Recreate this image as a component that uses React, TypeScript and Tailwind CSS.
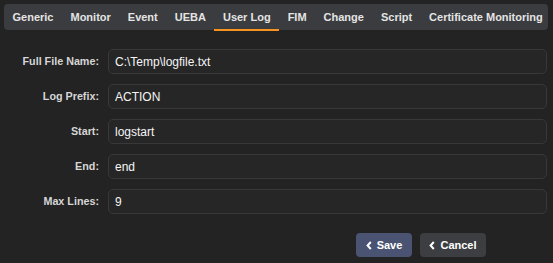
import { useState } from "react"

const tabs = ["Generic", "Monitor", "Event", "UEBA", "User Log", "FIM", "Change", "Script", "Certificate Monitoring"]

const fields = [
  { label: "Full File Name:", value: "C:\\Temp\\logfile.txt" },
  { label: "Log Prefix:", value: "ACTION" },
  { label: "Start:", value: "logstart" },
  { label: "End:", value: "end" },
  { label: "Max Lines:", value: "9" },
]

function Chevron() {
  return (
    <svg width="6" height="9" viewBox="0 0 6 9" className="shrink-0">
      <path d="M4.8 1 L1.6 4.5 L4.8 8" fill="none" stroke="currentColor" strokeWidth="2" />
    </svg>
  )
}

export default function App() {
  const [active, setActive] = useState("User Log")
  const [values, setValues] = useState(fields.map(f => f.value))

  return (
    <div className="w-[553px] h-[263px] bg-[#232323] pt-1 px-1 font-['Liberation_Sans',Arial,sans-serif] overflow-hidden">
      <div className="flex h-[26px] w-[544px] bg-[#3b3c3f] rounded-[4px] items-stretch">
        {tabs.map(t => (
          <button key={t} onClick={() => setActive(t)}
            className="relative px-[8.5px] text-[11px] font-bold whitespace-nowrap text-[#e4e4e4] leading-none flex items-center pt-[1px]">
            {t}
            {active === t && <span className="absolute left-0 right-0 bottom-[-1px] h-[2px] bg-[#f7931e]" />}
          </button>
        ))}
      </div>

      <div className="mt-[19px] grid grid-cols-[95px_1fr] gap-x-[9px] gap-y-[10px] pr-[2px]">
        {fields.map((f, i) => (
          <div key={f.label} className="contents">
            <label className="text-[10.75px] font-bold text-[#d6d6d6] text-right self-center">{f.label}</label>
            <input value={values[i]} onChange={e => setValues(values.map((v, j) => j === i ? e.target.value : v))}
              className="h-[25px] rounded-[5px] border border-[#383838] bg-[#262626] px-[6px] text-[12px] text-[#f5f5f5] focus:outline-none" />
          </div>
        ))}
      </div>

      <div className="mt-[19px] flex gap-2 pl-[352px]">
        <button className="h-[24px] w-[56px] rounded-[4px] bg-[#4a5372] text-white text-[11px] font-bold flex items-center justify-center gap-[5px]">
          <Chevron /> Save
        </button>
        <button className="h-[24px] w-[66px] rounded-[4px] bg-[#3d3e42] text-white text-[11px] font-bold flex items-center justify-center gap-[5px]">
          <Chevron /> Cancel
        </button>
      </div>
    </div>
  )
}
